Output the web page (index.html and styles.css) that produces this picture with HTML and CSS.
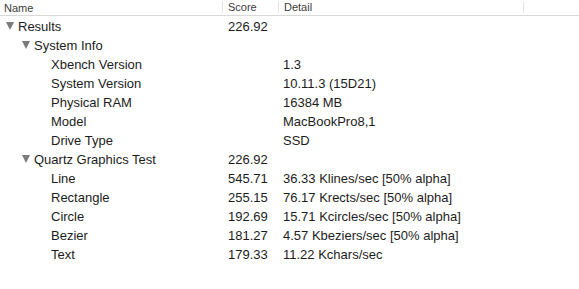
FILE: index.html
```html
<!DOCTYPE html>
<html>
<head>
<meta charset="utf-8">
<link rel="stylesheet" href="styles.css">
</head>
<body>
<div class="table">
  <div class="header">
    <div class="hcell name">Name</div>
    <div class="hcell score">Score</div>
    <div class="hcell detail">Detail</div>
    <div class="hcell rest"></div>
  </div>
  <div class="rows">
    <div class="row"><div class="c name l0"><span class="tri"></span>Results</div><div class="c score">226.92</div><div class="c detail"></div></div>
    <div class="row"><div class="c name l1"><span class="tri"></span>System Info</div><div class="c score"></div><div class="c detail"></div></div>
    <div class="row"><div class="c name l2">Xbench Version</div><div class="c score"></div><div class="c detail">1.3</div></div>
    <div class="row"><div class="c name l2">System Version</div><div class="c score"></div><div class="c detail">10.11.3 (15D21)</div></div>
    <div class="row"><div class="c name l2">Physical RAM</div><div class="c score"></div><div class="c detail">16384 MB</div></div>
    <div class="row"><div class="c name l2">Model</div><div class="c score"></div><div class="c detail">MacBookPro8,1</div></div>
    <div class="row"><div class="c name l2">Drive Type</div><div class="c score"></div><div class="c detail">SSD</div></div>
    <div class="row"><div class="c name l1"><span class="tri"></span>Quartz Graphics Test</div><div class="c score">226.92</div><div class="c detail"></div></div>
    <div class="row"><div class="c name l2">Line</div><div class="c score">545.71</div><div class="c detail">36.33 Klines/sec [50% alpha]</div></div>
    <div class="row"><div class="c name l2">Rectangle</div><div class="c score">255.15</div><div class="c detail">76.17 Krects/sec [50% alpha]</div></div>
    <div class="row"><div class="c name l2">Circle</div><div class="c score">192.69</div><div class="c detail">15.71 Kcircles/sec [50% alpha]</div></div>
    <div class="row"><div class="c name l2">Bezier</div><div class="c score">181.27</div><div class="c detail">4.57 Kbeziers/sec [50% alpha]</div></div>
    <div class="row"><div class="c name l2">Text</div><div class="c score">179.33</div><div class="c detail">11.22 Kchars/sec</div></div>
  </div>
</div>
</body>
</html>
```
FILE: styles.css
```css
html, body {
  margin: 0;
  padding: 0;
  background: #ffffff;
}
body {
  font-family: "Liberation Sans", Arial, sans-serif;
  color: #1a1a1a;
  width: 579px;
  height: 289px;
  overflow: hidden;
}
.header {
  display: grid;
  grid-template-columns: 222px 56px 245px 1fr;
  height: 15px;
  border-bottom: 1px solid #d9d9d9;
}
.hcell {
  font-size: 11px;
  line-height: 15px;
  color: #3c3c3c;
  position: relative;
}
.hcell.name { padding-left: 4px; }
.hcell.score, .hcell.detail, .hcell.rest {
  border-left: 1px solid #e3e3e3;
  padding-left: 5px;
  margin: 2px 0 3px;
  line-height: 11px;
}
.rows {
  padding-top: 1px;
}
.row {
  display: grid;
  grid-template-columns: 228px 55px 1fr;
  height: 19px;
  align-items: center;
}
.c {
  font-size: 13px;
  line-height: 19px;
  white-space: nowrap;
  color: #1c1c1c;
}
.name {
  display: flex;
  align-items: center;
}
.c.l0 { padding-left: 6px; }
.c.l1 { padding-left: 22px; }
.c.l2 { padding-left: 51px; }
.tri {
  width: 0;
  height: 0;
  border-left: 4.5px solid transparent;
  border-right: 4.5px solid transparent;
  border-top: 8px solid #7b7b7b;
  margin-right: 4px;
  margin-top: -1px;
}
```
